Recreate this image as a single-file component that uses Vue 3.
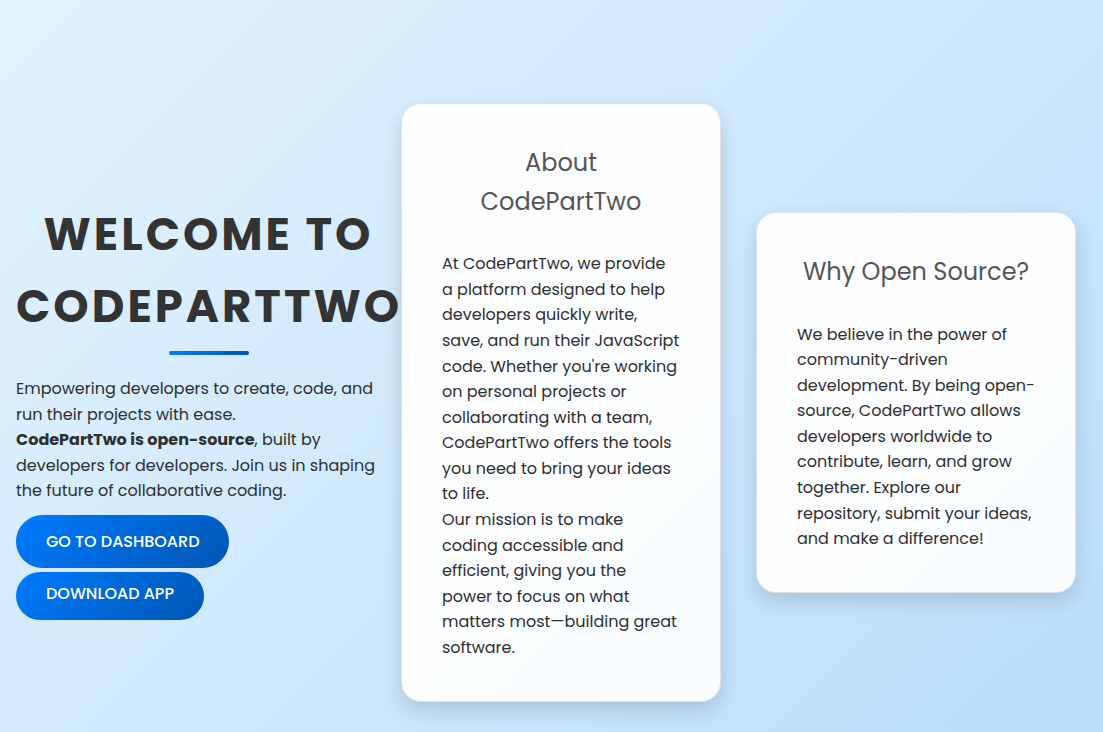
<script setup>
const aboutParagraphs = [
  "At CodePartTwo, we provide a platform designed to help developers quickly write, save, and run their JavaScript code. Whether you're working on personal projects or collaborating with a team, CodePartTwo offers the tools you need to bring your ideas to life.",
  'Our mission is to make coding accessible and efficient, giving you the power to focus on what matters most—building great software.',
]
</script>

<template>
  <main class="page">
    <section class="hero">
      <h1>Welcome to CodePartTwo</h1>
      <div class="rule"></div>
      <p>
        Empowering developers to create, code, and run their projects with ease.<br />
        <strong>CodePartTwo is open-source</strong>, built by developers for developers. Join us in
        shaping the future of collaborative coding.
      </p>
      <div class="actions">
        <a class="btn" href="#dashboard">Go to Dashboard</a>
        <button class="btn download" type="button">Download App</button>
      </div>
    </section>
    <div class="cards">
      <section class="card">
        <h2>About CodePartTwo</h2>
        <p v-for="text in aboutParagraphs" :key="text">{{ text }}</p>
      </section>
      <section class="card">
        <h2>Why Open Source?</h2>
        <p>
          We believe in the power of community-driven development. By being open-source, CodePartTwo
          allows developers worldwide to contribute, learn, and grow together. Explore our
          repository, submit your ideas, and make a difference!
        </p>
      </section>
    </div>
  </main>
</template>

<style>
body {
  margin: 0;
}
</style>

<style scoped>
.page {
  box-sizing: border-box;
  min-height: 100vh;
  padding: 73px 27px 0 16px;
  display: flex;
  align-items: center;
  background: linear-gradient(135deg, #e3f3fe, #bbdefb);
  font-family: Poppins, Inter, "Open Sans", sans-serif;
  font-size: 16px;
  line-height: 1.6;
  color: #2f2f30;
}
h1,
h2,
p {
  margin: 0;
}
.hero {
  flex: 0 0 385px;
  min-width: 0;
  padding-top: 14px;
}
h1 {
  font-size: 45px;
  font-weight: 700;
  letter-spacing: 3px;
  text-align: center;
  text-transform: uppercase;
  color: #333;
}
.rule {
  width: 80px;
  height: 4px;
  margin: 8px auto 21px;
  border-radius: 2px;
  background: linear-gradient(90deg, #007bff, #0056b3);
}
.actions {
  display: flex;
  flex-direction: column;
  align-items: flex-start;
  gap: 4px;
  margin-top: 11px;
}
.btn {
  box-sizing: border-box;
  height: 53px;
  padding: 14px 30px 13px;
  border: 0;
  border-radius: 30px;
  background: linear-gradient(135deg, #007bff, #0056b3);
  color: #fff;
  font: inherit;
  font-weight: 500;
  text-transform: uppercase;
  text-decoration: none;
  white-space: nowrap;
  cursor: pointer;
}
.download {
  height: 48px;
  padding: 9px 30px 13px;
}
.cards {
  flex: 1;
  min-width: 0;
  display: flex;
  align-items: center;
  gap: 35px;
}
.card {
  box-sizing: border-box;
  flex: 1 1 0;
  min-width: 0;
  padding: 40px;
  border: 1px solid #dfe3e7;
  border-radius: 20px;
  background: linear-gradient(135deg, #fcfeff, #fdfdff 30%, #f9fdff);
  box-shadow: 0 8px 20px rgba(0, 0, 0, 0.15);
}
h2 {
  margin-bottom: 30px;
  font-size: 24px;
  font-weight: 400;
  text-align: center;
  color: #555;
}
</style>
